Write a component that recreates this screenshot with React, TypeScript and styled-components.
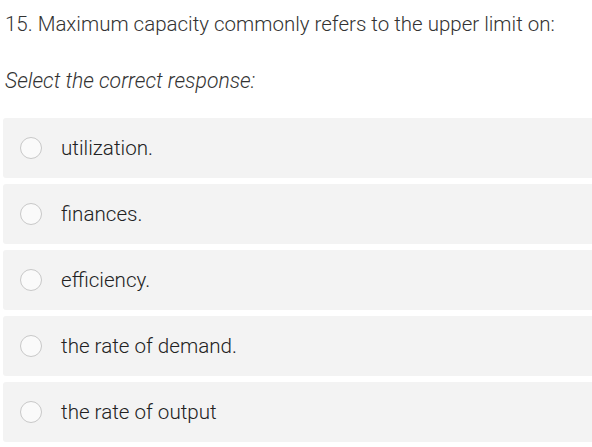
import styled, { createGlobalStyle } from 'styled-components'

const GlobalStyle = createGlobalStyle`
  body {
    margin: 0;
    background: #ffffff;
    font-family: Roboto, "Liberation Sans", sans-serif;
    font-weight: 300;
    color: #222;
  }
`

const options = [
  'utilization.',
  'finances.',
  'efficiency.',
  'the rate of demand.',
  'the rate of output',
]

const App = () => {
  return (
    <>
      <GlobalStyle />
      <Page>
        <Question>15. Maximum capacity commonly refers to the upper limit on:</Question>
        <Prompt>Select the correct response:</Prompt>
        <OptionList>
          {options.map((label) => (
            <Option key={label}>
              <Radio />
              <OptionLabel>{label}</OptionLabel>
            </Option>
          ))}
        </OptionList>
      </Page>
    </>
  )
}

const Page = styled.div`
  padding: 11px 0 0 3px;
`

const Question = styled.div`
  margin-left: 2px;
  font-size: 20.5px;
  line-height: 26px;
  color: #333;
`

const Prompt = styled.div`
  margin: 31px 0 0 2px;
  font-size: 21.2px;
  font-style: italic;
  line-height: 26px;
  color: #333;
`

const OptionList = styled.div`
  display: flex;
  flex-direction: column;
  gap: 6px;
  margin-top: 24px;
  width: 600px;
`

const Option = styled.div`
  display: flex;
  align-items: center;
  height: 60px;
  padding-left: 17px;
  background: #f3f3f3;
  border-radius: 3px;
`

const Radio = styled.span`
  box-sizing: border-box;
  width: 22px;
  height: 22px;
  border-radius: 50%;
  border: 1px solid #c8c8c8;
  background: #fafafa;
  flex-shrink: 0;
`

const OptionLabel = styled.span`
  margin-left: 19px;
  font-size: 20.6px;
  color: #222;
`

export default App
